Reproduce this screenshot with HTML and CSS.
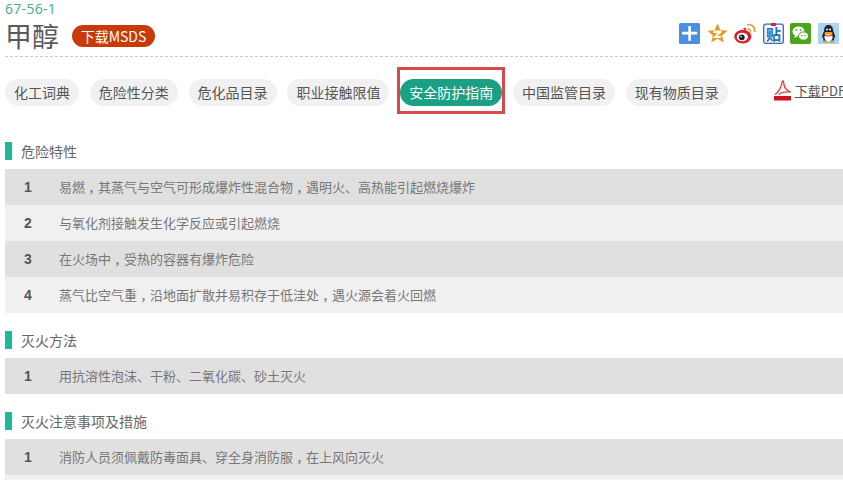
FILE: index.html
```html
<!DOCTYPE html>
<html lang="zh">
<head>
<meta charset="utf-8">
<title>甲醇</title>
<link rel="stylesheet" href="styles.css">
</head>
<body>
<div class="page">
  <div class="cas">67-56-1</div>
  <header class="head">
    <h1 class="name">甲醇</h1>
    <a class="msds">下载MSDS</a>
    <div class="share">
      <svg class="ico" viewBox="0 0 21 21"><rect width="21" height="21" rx="1.5" fill="#4a90e2"/><path d="M3 8.800h6.300V3h2.600v5.800h6.300v2.600h-6.300v6.400H9.300v-6.400H3z" fill="#fff"/></svg>
      <svg class="ico" viewBox="0 0 21 21"><path d="M10.500.5l2.900 6.600 7.100.7-5.400 4.700 1.700 7-6.300-3.800-6.300 3.800 1.700-7L.5 7.800l7.100-.7z" fill="#eb9a1a"/><path d="M6.500 7.500h8v2l-4 3.500h4.200l-1.500 2H6l4.500-5H6.500z" fill="#fff"/></svg>
      <svg class="ico ico-wide" viewBox="0 0 22 21"><ellipse cx="8.800" cy="13.600" rx="8.600" ry="6.800" fill="#d8232a"/><path d="M9 5.500c2.500-1.500 3.500-.5 3 2.500" fill="#d8232a"/><ellipse cx="8.300" cy="14" rx="5.600" ry="4.200" fill="#fff"/><circle cx="7.800" cy="14.300" r="2.900" fill="#222"/><circle cx="7" cy="13.600" r=".8" fill="#fff"/><path d="M13 6.200c2.300-.6 4 1 3.400 3.300" fill="none" stroke="#e9a23a" stroke-width="1.500"/><path d="M13 1.800c5-1.100 8.500 2.500 7.400 7.400" fill="none" stroke="#e9a23a" stroke-width="1.800"/></svg>
      <svg class="ico" viewBox="0 0 21 21"><rect x=".7" y="1.200" width="19.600" height="19.100" rx="2" fill="#f2f7fd" stroke="#2f6db5" stroke-width="1.300"/><path d="M8 0h5v3H8z" fill="#d8232a"/><text class="tie" x="10.500" y="16.600" text-anchor="middle">贴</text></svg>
      <svg class="ico" viewBox="0 0 21 21"><rect width="21" height="21" rx="2" fill="#4aa51c"/><ellipse cx="8.500" cy="8.500" rx="6" ry="5" fill="#fff"/><path d="M5 12l-.6 3 3-1.800z" fill="#fff"/><ellipse cx="13.500" cy="13" rx="5" ry="4.100" fill="#fff" stroke="#4aa51c"/><circle cx="6.500" cy="7" r=".9" fill="#4aa51c"/><circle cx="10.500" cy="7" r=".9" fill="#4aa51c"/><circle cx="12" cy="12.500" r=".7" fill="#4aa51c"/><circle cx="15" cy="12.500" r=".7" fill="#4aa51c"/></svg>
      <svg class="ico" viewBox="0 0 21 21"><rect width="21" height="21" fill="#a9d3ef"/><path d="M10.500 2c3.300 0 4.600 2.600 4.600 5.600l1.700 4.400c.6 1.900.2 3-.7 2.600v2.900H5.200v-2.900c-.9.400-1.300-.7-.7-2.600l1.700-4.400C6.200 4.600 7.200 2 10.500 2z" fill="#222"/><ellipse cx="10.500" cy="14" rx="4.100" ry="4.300" fill="#fff"/><path d="M7.300 9h6.400l1.200 1.400c-2.400 1.600-6.400 1.600-8.800 0z" fill="#f39c12"/><path d="M6.500 11.500c2.500 1.200 5.500 1.200 8 0l-.3 1.300c-2.400 1-5 1-7.400 0z" fill="#d8232a"/><path d="M5 18.200h4.500v1.600H5zM11.500 18.200H16v1.600h-4.500z" fill="#f39c12"/><circle cx="9" cy="6.500" r="1" fill="#fff"/><circle cx="12" cy="6.500" r="1" fill="#fff"/></svg>
    </div>
  </header>
  <nav class="tabs">
    <a class="tab">化工词典</a>
    <a class="tab">危险性分类</a>
    <a class="tab">危化品目录</a>
    <a class="tab">职业接触限值</a>
    <a class="tab active">安全防护指南</a>
    <a class="tab">中国监管目录</a>
    <a class="tab">现有物质目录</a>
    <a class="pdf">
      <svg class="pdf-ico" viewBox="0 0 19 21"><path d="M2 14.500C5.500 12.500 8.500 7 9 2.500c.2-2 1.700-2 1.700 0 0 4.500 3 8 7 9.500-3.500-.5-9.500.2-12 2.500" fill="none" stroke="#dc3a30" stroke-width="1.300"/><path d="M1 16h17v4.500H1z" fill="#c9161c"/></svg>
      <span class="pdf-text">下载PDF</span>
    </a>
  </nav>
  <section class="sec">
    <h2 class="sec-title">危险特性</h2>
    <div class="row"><b class="num">1</b><span>易燃<i class="cm">，</i>其蒸气与空气可形成爆炸性混合物<i class="cm">，</i>遇明火、高热能引起燃烧爆炸</span></div>
    <div class="row"><b class="num">2</b><span>与氧化剂接触发生化学反应或引起燃烧</span></div>
    <div class="row"><b class="num">3</b><span>在火场中<i class="cm">，</i>受热的容器有爆炸危险</span></div>
    <div class="row"><b class="num">4</b><span>蒸气比空气重<i class="cm">，</i>沿地面扩散并易积存于低洼处<i class="cm">，</i>遇火源会着火回燃</span></div>
  </section>
  <section class="sec">
    <h2 class="sec-title">灭火方法</h2>
    <div class="row"><b class="num">1</b><span>用抗溶性泡沫、干粉、二氧化碳、砂土灭火</span></div>
  </section>
  <section class="sec">
    <h2 class="sec-title">灭火注意事项及措施</h2>
    <div class="row"><b class="num">1</b><span>消防人员须佩戴防毒面具、穿全身消防服<i class="cm">，</i>在上风向灭火</span></div>
    <div class="row"></div>
  </section>
</div>
</body>
</html>
```
FILE: styles.css
```css
html, body {
  margin: 0;
  padding: 0;
  height: 480px;
  overflow: hidden;
  background: #fff;
}
body {
  font-family: "Noto Sans CJK SC", "Liberation Sans", sans-serif;
  color: #666;
}
.page {
  padding-left: 5px;
  padding-top: 2px;
}
.cas {
  font-family: "Open Sans", "Liberation Sans", sans-serif;
  font-size: 14px;
  line-height: 14px;
  letter-spacing: .3px;
  color: #4aa98f;
}
.head {
  display: flex;
  align-items: center;
  height: 40px;
  border-bottom: 1px dashed #ccc;
}
.name {
  margin: 0;
  font-size: 27px;
  font-weight: 400;
  line-height: 40px;
  color: #5a5a5a;
}
.msds {
  margin-left: 13px;
  width: 83px;
  height: 22px;
  line-height: 22px;
  border-radius: 11px;
  background: #c83a08;
  color: #fff;
  font-size: 14px;
  text-align: center;
}
.share {
  display: flex;
  gap: 6.6px;
  margin-left: auto;
  margin-right: 4px;
  margin-bottom: 6px;
}
.ico {
  width: 21px;
  height: 21px;
  display: block;
}
.ico-wide {
  width: 22px;
}
.tie {
  font-size: 15px;
  fill: #2f6db5;
  font-weight: 700;
}
.tabs {
  display: flex;
  align-items: center;
  gap: 10.8px;
  margin-top: 22px;
  width: 900px;
}
.tab {
  position: relative;
  height: 27px;
  line-height: 27px;
  padding: 0 9px;
  border-radius: 14px;
  background: #f1f1f1;
  color: #555;
  font-size: 14px;
  white-space: nowrap;
}
.tab.active {
  background: #1aa085;
  color: #fff;
}
.tab.active::after {
  content: "";
  position: absolute;
  left: -3px;
  right: -3px;
  top: -12px;
  bottom: -8px;
  border: 3px solid #d9484a;
}
.pdf {
  display: flex;
  align-items: center;
  gap: 3px;
  margin-left: 34.2px;
  margin-bottom: 5px;
  font-size: 13px;
  color: #555;
  white-space: nowrap;
}
.pdf-ico {
  width: 19px;
  height: 21px;
  display: block;
}
.pdf-text {
  text-decoration: underline;
}
.sec {
  margin-top: 18px;
}
.tabs + .sec {
  margin-top: 36px;
}
.sec-title {
  position: relative;
  margin: 0;
  padding-left: 16px;
  height: 18px;
  line-height: 19px;
  font-size: 14px;
  font-weight: 400;
  color: #666;
  margin-bottom: 9px;
}
.sec-title::before {
  content: "";
  position: absolute;
  left: 0;
  top: 0;
  width: 7px;
  height: 18px;
  background: #1eb99a;
}
.row {
  display: flex;
  height: 36px;
  line-height: 36px;
  font-size: 13px;
  color: #777;
  background: #e0e0e0;
}
.row:nth-of-type(even) {
  background: #f0f0f0;
}
.cm {
  display: inline-block;
  width: 13px;
  text-align: center;
  font-style: normal;
  font-feature-settings: "halt";
}
.num {
  width: 54px;
  padding-left: 19px;
  box-sizing: border-box;
  font-family: "Liberation Sans", sans-serif;
  font-size: 14px;
  color: #555;
}
```
